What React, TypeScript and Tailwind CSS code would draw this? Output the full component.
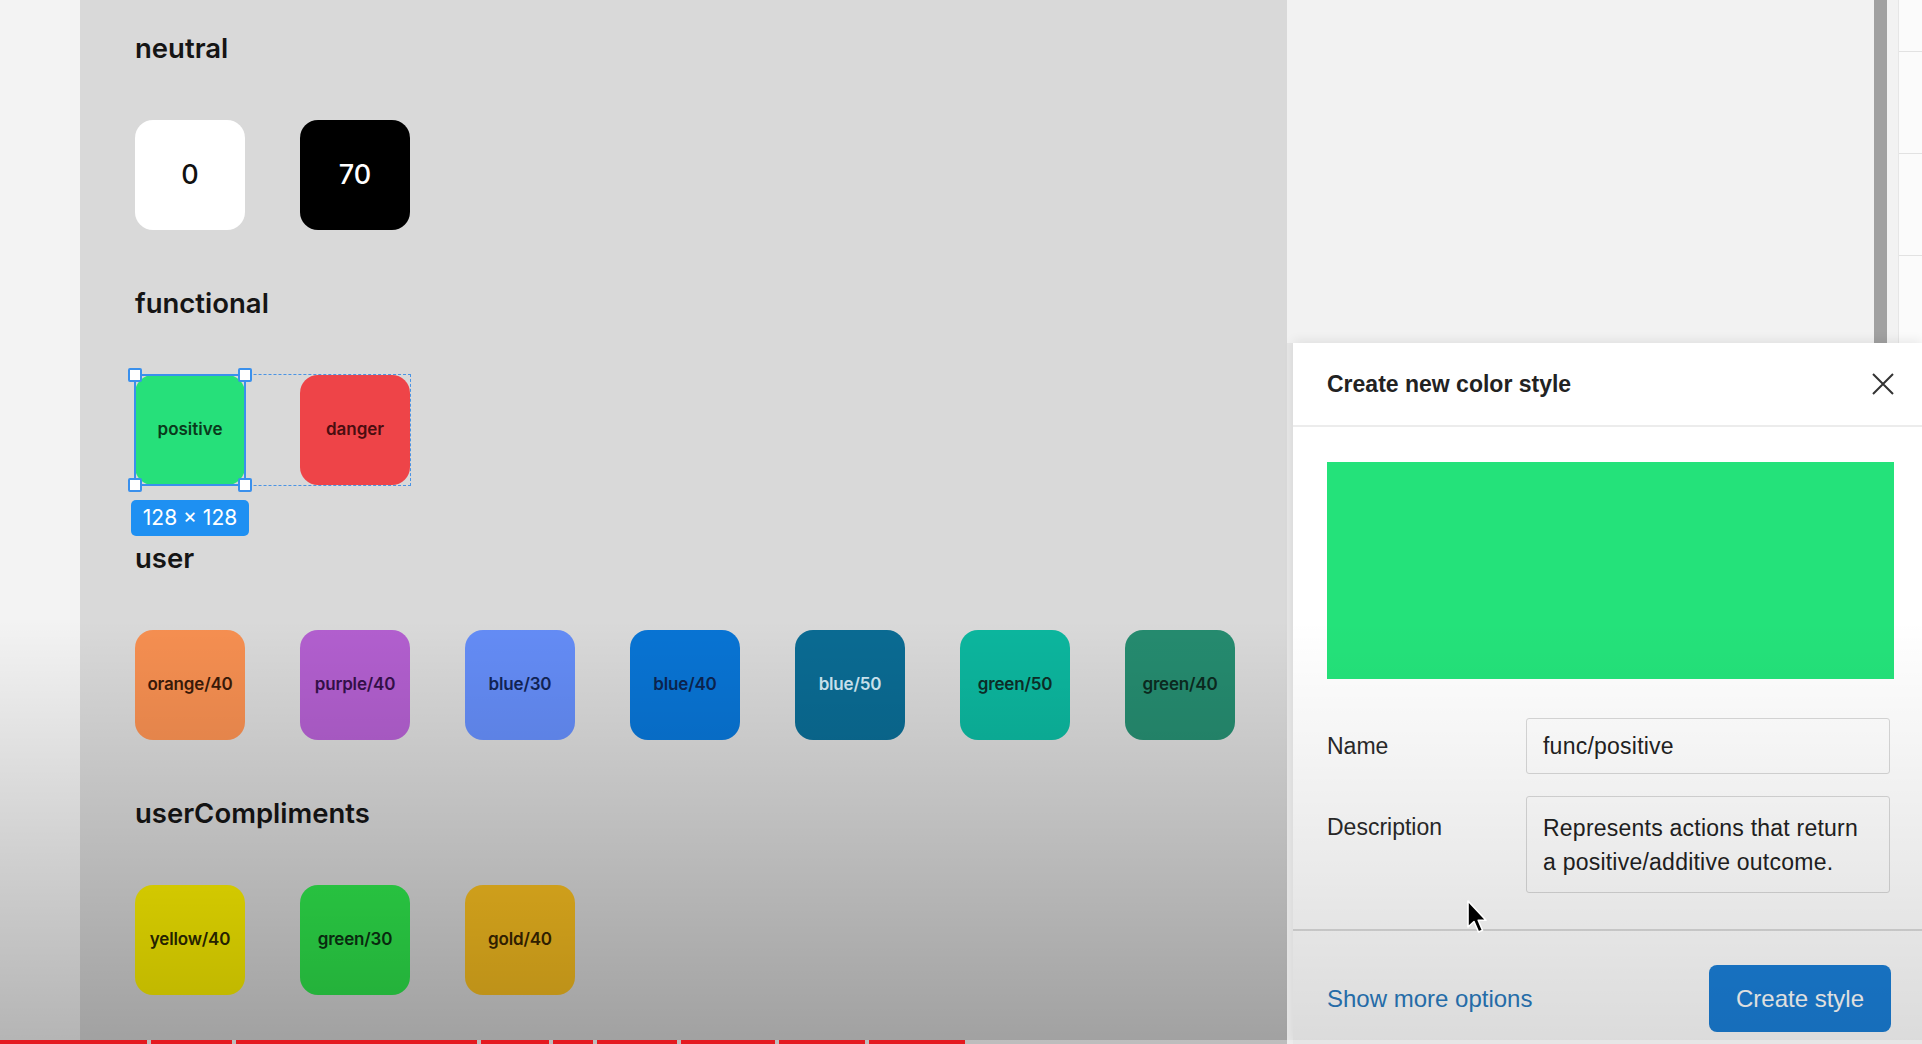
const swatchBase =
  "flex h-[110px] w-[110px] shrink-0 items-center justify-center rounded-[18px]";

type Sw = { label: string; bg: string; text: string };

const userColors: Sw[] = [
  { label: "orange/40", bg: "bg-[#f68f51]", text: "text-[#3a1a08]" },
  { label: "purple/40", bg: "bg-[#b25fcf]", text: "text-[#35104a]" },
  { label: "blue/30", bg: "bg-[#648cf6]", text: "text-[#122456]" },
  { label: "blue/40", bg: "bg-[#0874d4]", text: "text-[#0b2450]" },
  { label: "blue/50", bg: "bg-[#0a6b93]", text: "text-[#cfe8f4]" },
  { label: "green/50", bg: "bg-[#0cb69e]", text: "text-[#0c2e28]" },
  { label: "green/40", bg: "bg-[#258b6f]", text: "text-[#0b2a20]" },
];

const compliments: Sw[] = [
  { label: "yellow/40", bg: "bg-[#fbef00]", text: "text-[#2e2a00]" },
  { label: "green/30", bg: "bg-[#2fe64c]", text: "text-[#0b3312]" },
  { label: "gold/40", bg: "bg-[#f6bd20]", text: "text-[#3a2600]" },
];

// progress bar chapters (px widths)
const chapters = [147, 81, 241, 68, 40, 80, 94, 86, 96];

function Heading({ children }: { children: string }) {
  return (
    <div className="h-[30px] text-[27.5px] leading-[30px] font-semibold text-[#151515]">
      {children}
    </div>
  );
}

function Swatch({ s }: { s: Sw }) {
  return (
    <div className={`${swatchBase} ${s.bg} ${s.text} text-[17px] font-semibold tracking-[-0.01em]`}>
      {s.label}
    </div>
  );
}

function Handle({ pos }: { pos: string }) {
  return (
    <span
      className={`absolute h-[14px] w-[14px] rounded-[2px] border-2 border-[#3a90ec] bg-white ${pos}`}
    />
  );
}

function Canvas() {
  return (
    <div className="flex w-[1207px] shrink-0 flex-col gap-[58px] bg-[#d9d9d9] pt-[33px] pl-[55px]">
      <div>
        <Heading>neutral</Heading>
        <div className="mt-[57px] flex gap-[55px]">
          <div className={`${swatchBase} bg-white text-[27px] font-medium text-[#111]`}>0</div>
          <div className={`${swatchBase} bg-black text-[27px] font-medium text-white`}>70</div>
        </div>
      </div>

      <div>
        <Heading>functional</Heading>
        <div className="relative mt-[57px] flex w-fit gap-[55px]">
          <span className="absolute -inset-px border border-dashed border-[#4a94e4]" />
          <div className="relative">
            <div className={`${swatchBase} bg-[#26e07a] text-[17px] font-semibold text-[#0a3a1c]`}>
              positive
            </div>
            <span className="absolute -inset-[1px] border-2 border-[#3a90ec]" />
            <Handle pos="-left-[7px] -top-[7px]" />
            <Handle pos="-right-[7px] -top-[7px]" />
            <Handle pos="-left-[7px] -bottom-[7px]" />
            <Handle pos="-right-[7px] -bottom-[7px]" />
            <div className="absolute top-[125px] -left-[4px] flex h-[36px] w-[118px] items-center justify-center rounded-[5px] bg-[#1e90f2] text-[21px] text-white">
              128 × 128
            </div>
          </div>
          <div className={`${swatchBase} bg-[#ee4448] text-[17px] font-semibold text-[#4a0d10]`}>
            danger
          </div>
        </div>
      </div>

      <div>
        <Heading>user</Heading>
        <div className="mt-[57px] flex gap-[55px]">
          {userColors.map((s) => (
            <Swatch key={s.label} s={s} />
          ))}
        </div>
      </div>

      <div>
        <Heading>userCompliments</Heading>
        <div className="mt-[57px] flex gap-[55px]">
          {compliments.map((s) => (
            <Swatch key={s.label} s={s} />
          ))}
        </div>
      </div>
    </div>
  );
}

function Dialog() {
  return (
    <div className="relative ml-[6px] flex-1 bg-white font-['Liberation_Sans',Arial,sans-serif] shadow-[0_-3px_10px_rgba(0,0,0,0.07)]">
      <div className="flex h-[84px] items-center justify-between border-b-2 border-[#ececec] pr-[28px] pl-[34px]">
        <div className="text-[23px] font-bold text-[#222]">Create new color style</div>
        <svg width="22" height="22" viewBox="0 0 22 22" fill="none" stroke="#333" strokeWidth="2">
          <path d="M1 1 L21 21 M21 1 L1 21" />
        </svg>
      </div>

      <div className="pt-[35px] pr-[28px] pl-[34px]">
        <div className="h-[217px] w-[567px] bg-[#24e27a]" />

        <div className="mt-[39px] flex">
          <div className="w-[199px] text-[23px] leading-[56px] text-[#2a2a2a]">Name</div>
          <div className="flex h-[56px] w-[364px] items-center rounded-[3px] border border-[#d9d9d9] px-[16px] text-[23px] tracking-[0.01em] text-[#222]">
            func/positive
          </div>
        </div>

        <div className="mt-[22px] flex">
          <div className="w-[199px] pt-[14px] text-[23px] leading-[34px] text-[#2a2a2a]">Description</div>
          <div className="h-[97px] w-[364px] rounded-[3px] border border-[#d9d9d9] px-[16px] pt-[14px] text-[23px] leading-[34px] tracking-[0.01em] text-[#222]">
            Represents actions that return
            <br />
            a positive/additive outcome.
          </div>
        </div>
      </div>

      <div className="mt-[36px] flex items-center justify-between border-t-2 border-[#dcdcdc] pt-[34px] pr-[31px] pl-[34px]">
        <div className="text-[24px] text-[#2a7bc0]">Show more options</div>
        <div className="flex h-[67px] w-[182px] items-center justify-center rounded-[8px] bg-[#1a7fd8] text-[24px] text-white">
          Create style
        </div>
      </div>

      <span className="pointer-events-none absolute right-0 bottom-0 left-0 h-[424px] bg-linear-to-b from-[rgba(0,0,0,0)] to-[rgba(0,0,0,0.14)]" />
    </div>
  );
}

function RightPanel() {
  return (
    <div className="flex flex-1 flex-col bg-[#e6e6e6]">
      <div className="flex h-[343px] shrink-0">
        <div className="flex flex-1 justify-end bg-[#f2f2f2] pr-[11px]">
          <div className="w-[13px] bg-[#a1a1a1]" />
        </div>
        <div className="flex w-[24px] flex-col border-l border-[#e6e6e6] bg-[#fbfbfb]">
          <div className="h-[52px] border-b border-[#e2e2e2]" />
          <div className="h-[102px] border-b border-[#e2e2e2]" />
          <div className="h-[102px] border-b border-[#e2e2e2]" />
        </div>
      </div>
      <Dialog />
    </div>
  );
}

export default function App() {
  return (
    <div className="relative flex h-[1044px] w-[1922px] overflow-hidden bg-[#f3f3f3] font-['Inter',sans-serif]">
      <div className="w-[80px] shrink-0 bg-[#f3f3f3]" />
      <Canvas />
      <RightPanel />

      {/* video dimming over the canvas */}
      <span className="pointer-events-none absolute top-[620px] left-0 h-[424px] w-[1287px] bg-linear-to-b from-[rgba(0,0,0,0)] to-[rgba(0,0,0,0.26)]" />

      {/* mouse cursor */}
      <svg className="absolute top-[899px] left-[1466px]" width="24" height="36" viewBox="0 0 24 36">
        <path
          d="M2 2 L2 28 L8 22.5 L12.5 33 L16.5 31.3 L12.2 21.2 L20 21.2 Z"
          fill="#000"
          stroke="#fff"
          strokeWidth="1.6"
          strokeLinejoin="round"
        />
      </svg>

      {/* player progress bar */}
      <div className="absolute right-0 bottom-0 left-0 flex h-[4px] gap-[4px] bg-[rgba(255,255,255,0.3)]">
        {chapters.map((w, i) => (
          <div key={i} className="h-full bg-[#e5191f]" style={{ width: w }} />
        ))}
      </div>
    </div>
  );
}
